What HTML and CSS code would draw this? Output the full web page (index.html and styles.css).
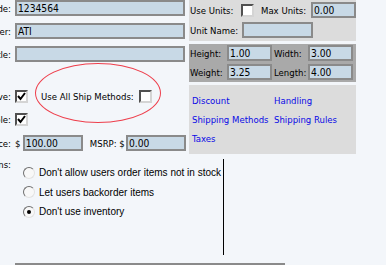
FILE: index.html
```html
<!DOCTYPE html>
<html lang="en">
    <head>
        <meta charset="utf-8" />
        <title>Edit Product</title>
        <link rel="stylesheet" href="styles.css">
    </head>
    <body>
        <div id="page">
            <div class="top">
                <div class="fields">
                    <div class="row">
                        <span class="lbl"><span>Product Code:</span></span>
                        <input class="fld wide" type="text" value="1234564" />
                    </div>
                    <div class="row r2">
                        <span class="lbl"><span>Manufacturer:</span></span>
                        <input class="fld wide" type="text" value="ATI" />
                    </div>
                    <div class="row r2">
                        <span class="lbl"><span>Product Title:</span></span>
                        <input class="fld wide" type="text" value="" />
                    </div>
                    <div class="row r4">
                        <span class="lbl"><span>Active:</span></span>
                        <span class="cb on"><svg viewBox="0 0 9 9" width="9" height="9"><path d="M1 4 L3.5 7 L8 1" fill="none" stroke="#000" stroke-width="2"/></svg></span>
                        <span class="shipall">Use All Ship Methods:</span>
                        <span class="cb"></span>
                        <div class="callout"></div>
                    </div>
                    <div class="row r5">
                        <span class="lbl"><span>Taxable:</span></span>
                        <span class="cb on"><svg viewBox="0 0 9 9" width="9" height="9"><path d="M1 4 L3.5 7 L8 1" fill="none" stroke="#000" stroke-width="2"/></svg></span>
                    </div>
                    <div class="row r6">
                        <span class="lbl"><span>Price:</span></span>
                        <span class="cur">$</span>
                        <input class="fld price" type="text" value="100.00" />
                        <span class="msrp">MSRP: $</span>
                        <input class="fld price" type="text" value="0.00" />
                    </div>
                </div>

                <div class="side">
                    <div class="box units">
                        <div class="srow">
                            <span class="t w51">Use Units:</span>
                            <span class="cb"></span>
                            <span class="t w50 ml7">Max Units:</span>
                            <input class="fld small" type="text" value="0.00" />
                        </div>
                        <div class="srow">
                            <span class="t w52">Unit Name:</span>
                            <input class="fld uname" type="text" value="" />
                        </div>
                    </div>
                    <div class="box dims">
                        <div class="srow">
                            <span class="t w37">Height:</span>
                            <input class="fld small" type="text" value="1.00" />
                            <span class="t w34 ml2">Width:</span>
                            <input class="fld small" type="text" value="3.00" />
                        </div>
                        <div class="srow">
                            <span class="t w37">Weight:</span>
                            <input class="fld small" type="text" value="3.25" />
                            <span class="t w34 ml2">Length:</span>
                            <input class="fld small" type="text" value="4.00" />
                        </div>
                    </div>
                    <div class="box links">
                        <a href="#">Discount</a>
                        <a href="#">Handling</a>
                        <a href="#">Shipping Methods</a>
                        <a href="#">Shipping Rules</a>
                        <a href="#">Taxes</a>
                    </div>
                </div>
            </div>

            <div class="inv">
                <span class="lbl"><span>Options:</span></span>
                <div class="radios">
                    <label class="opt"><span class="rd"></span>Don't allow users order items not in stock</label>
                    <label class="opt"><span class="rd"></span>Let users backorder items</label>
                    <label class="opt"><span class="rd sel"></span>Don't use inventory</label>
                </div>
            </div>

            <div class="more">
                <div class="select"><span class="btn"></span></div>
            </div>
        </div>
    </body>
</html>
```

FILE: styles.css
```css
* {
    margin: 0;
    padding: 0;
}

html, body {
    height: 265px;
    overflow: hidden;
}

body {
    background: #f3f6fa;
    font-family: "DejaVu Sans Condensed", "Liberation Sans", Arial, sans-serif;
    font-size: 9.5px;
    color: #000;
}

#page {
    width: 386px;
}

.top {
    display: flex;
    align-items: flex-start;
}

.fields {
    width: 186px;
    flex: none;
}

.row {
    display: flex;
    align-items: center;
    height: 16px;
    position: relative;
}

.row.r2 { margin-top: 7px; }
.row.r4 { margin-top: 26px; }
.row.r5 { margin-top: 7px; }
.row.r6 { margin-top: 8px; }

.lbl {
    width: 11px;
    margin-right: 4px;
    flex: none;
    display: flex;
    justify-content: flex-end;
    overflow: hidden;
    white-space: nowrap;
}

.lbl span {
    flex: none;
}

.fld {
    box-sizing: border-box;
    height: 16px;
    border: 2px solid #8a8a8a;
    background: #c8d9e6;
    font-family: "DejaVu Sans Condensed", "Liberation Sans", Arial, sans-serif;
    font-size: 10.2px;
    padding: 0 1px;
    outline: none;
    flex: none;
}

.fld.wide { width: 170px; }
.fld.price { width: 60px; }
.fld.small { width: 45px; }
.fld.uname { width: 71px; }

.cb {
    box-sizing: border-box;
    width: 13px;
    height: 13px;
    border: 2px solid;
    border-color: #505050 #d4d4d4 #d4d4d4 #505050;
    background: #fff;
    display: flex;
    align-items: center;
    justify-content: center;
    flex: none;
}

.row .cb:first-of-type {
    margin-left: 4px;
}

.shipall {
    margin-left: 13px;
    width: 98px;
    white-space: nowrap;
}

.callout {
    position: absolute;
    left: 35px;
    top: -25px;
    width: 126px;
    height: 60px;
    box-sizing: border-box;
    border: 1.5px solid #ee3f4c;
    border-radius: 50%;
}

.cur {
    width: 8px;
}

.msrp {
    margin-left: 7px;
    width: 37px;
    white-space: nowrap;
}

.side {
    width: 167px;
    margin-left: 3px;
    flex: none;
}

.box {
    background: #dcdcdc;
}

.box.units {
    padding: 2px 0 3px 1px;
    display: flex;
    flex-direction: column;
    gap: 4px;
}

.box.dims {
    margin-top: 3px;
    background: #a9a9a9;
    padding: 1px 0 2px 1px;
    display: flex;
    flex-direction: column;
    gap: 3px;
}

.srow {
    display: flex;
    align-items: center;
    height: 16px;
}

.t {
    white-space: nowrap;
    flex: none;
}

.w51 { width: 51px; }
.w50 { width: 50px; }
.w52 { width: 52px; }
.w37 { width: 37px; }
.w34 { width: 34px; }
.ml7 { margin-left: 7px; }
.ml2 { margin-left: 2px; }

.box.links {
    margin-top: 3px;
    height: 69px;
    box-sizing: border-box;
    padding: 6px 0 0 3px;
    display: grid;
    grid-template-columns: 82px auto;
    grid-auto-rows: 19px;
    align-content: start;
}

a {
    color: #0a0ae6;
    text-decoration: none;
    white-space: nowrap;
    line-height: 19px;
}

.inv {
    margin-top: 5px;
    width: 223px;
    height: 96px;
    border-right: 1px solid #000;
    display: flex;
    align-items: flex-start;
}

.inv .lbl {
    line-height: 11px;
}

.radios {
    padding-top: 4px;
    margin-left: 8px;
    display: flex;
    flex-direction: column;
}

.opt {
    display: flex;
    align-items: center;
    height: 19.5px;
    white-space: nowrap;
    font-family: "Liberation Sans", Arial, sans-serif;
    font-size: 10px;
}

.rd {
    box-sizing: border-box;
    width: 12px;
    height: 12px;
    border-radius: 50%;
    border: 1.5px solid;
    border-color: #6e6e6e #e2e2e2 #e2e2e2 #6e6e6e;
    background: #f8f8f8;
    margin-right: 4px;
    display: flex;
    align-items: center;
    justify-content: center;
    flex: none;
}

.rd.sel::after {
    content: "";
    width: 4px;
    height: 4px;
    border-radius: 50%;
    background: #000;
}

.more {
    margin-top: 8px;
    padding-left: 15px;
}

.select {
    box-sizing: border-box;
    width: 270px;
    height: 20px;
    border: 2px solid #8a8a8a;
    background: #c8d9e6;
    display: flex;
    justify-content: flex-end;
}

.select .btn {
    width: 14px;
    height: 16px;
    background: #f0f0f0;
    border-left: 1px solid #b0b0b0;
}
```
